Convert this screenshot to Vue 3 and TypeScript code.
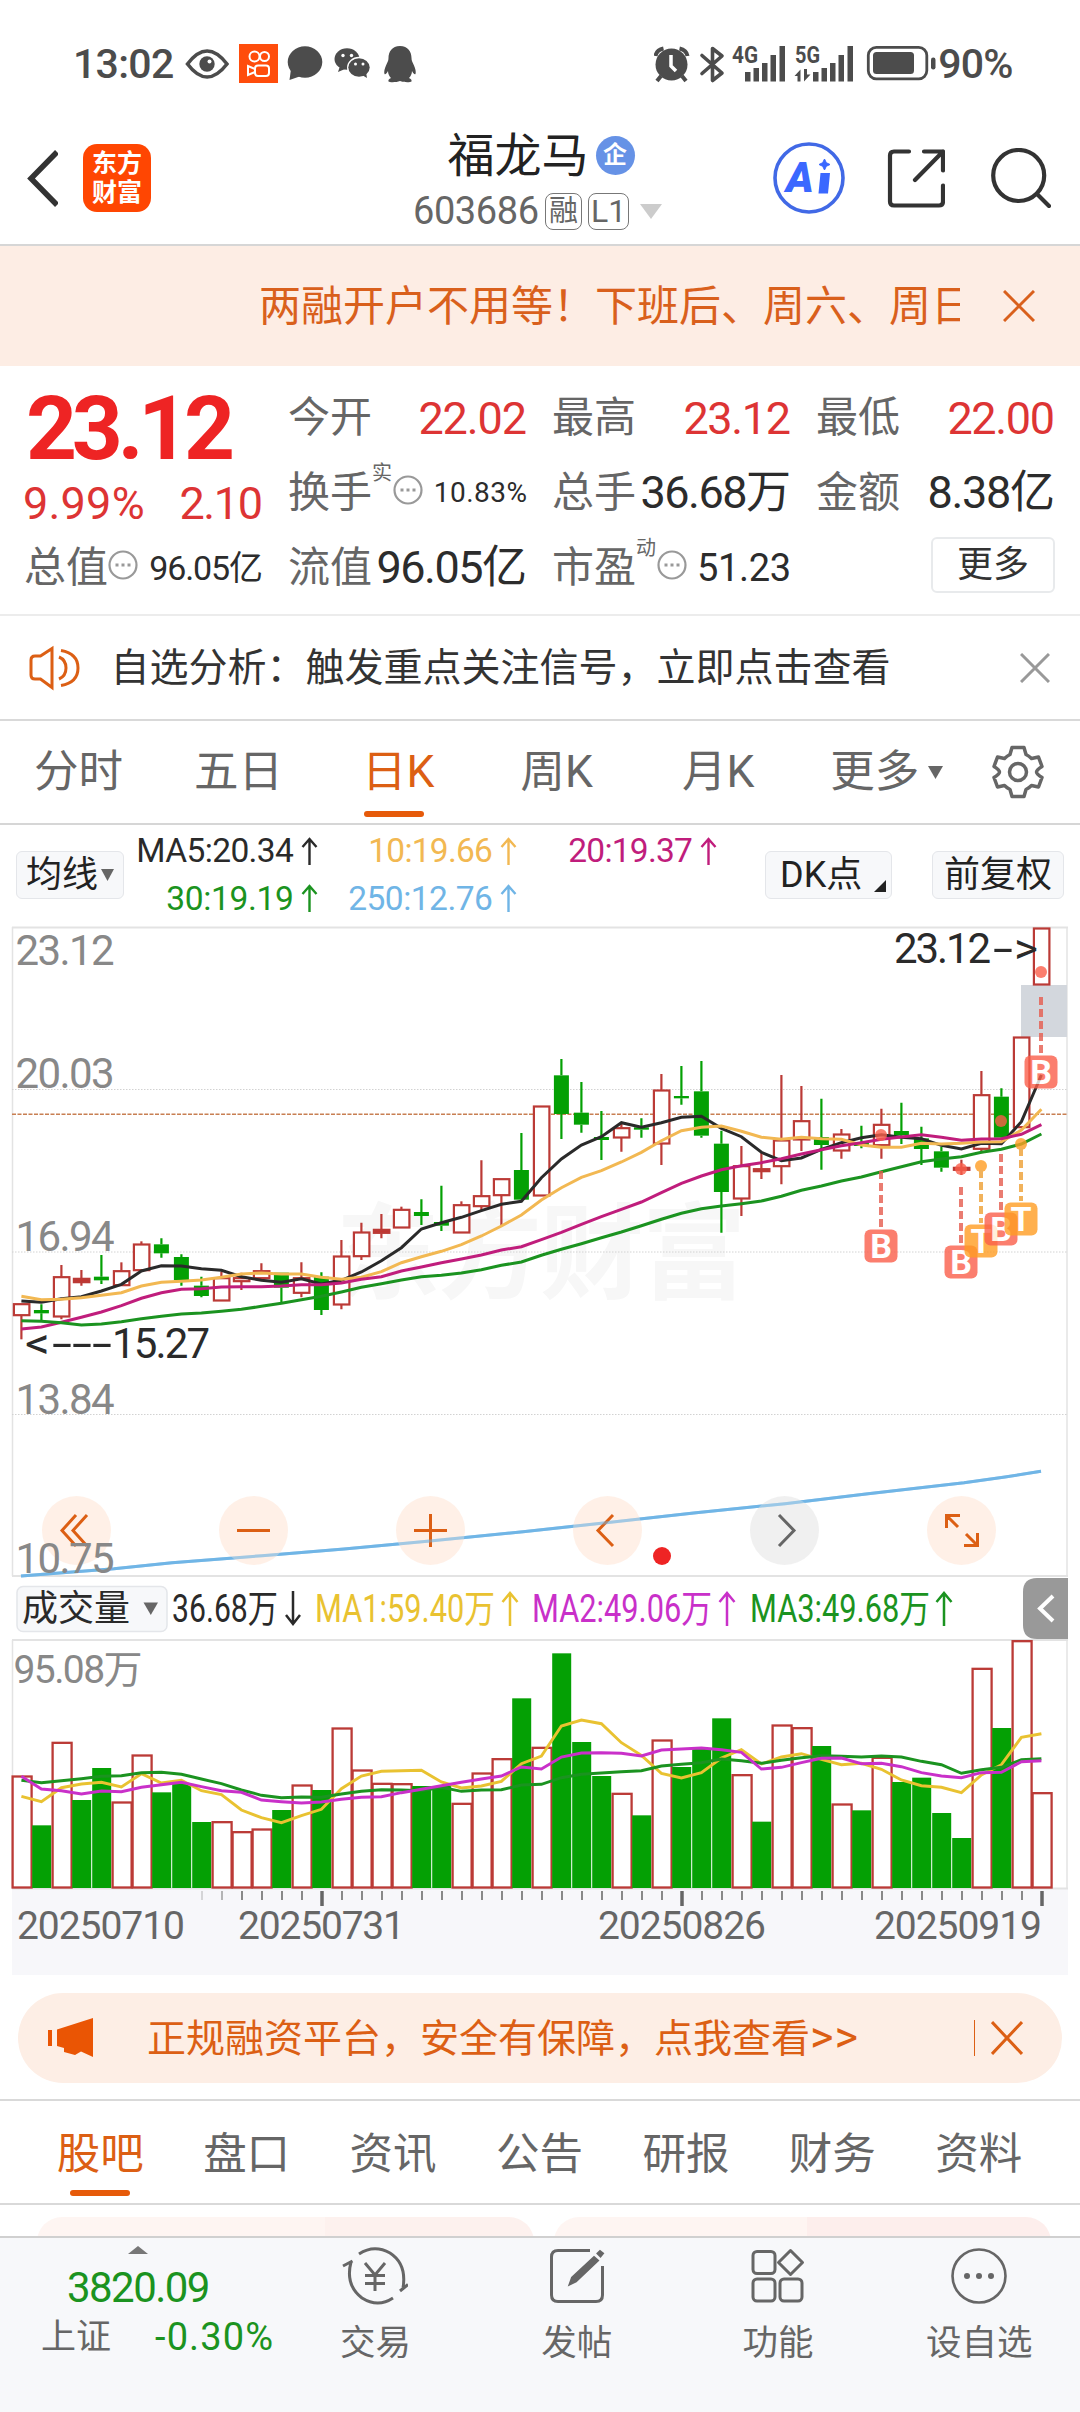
<script setup lang="ts">
type Candle = [kind: 'u' | 'd' | 'f', open: number, close: number, high: number, low: number]

// Tightens or loosens tracking so a label spans the given width.
const vFit = {
  mounted(el: HTMLElement, binding: { value: number }) {
    const range = document.createRange()
    range.selectNodeContents(el)
    const natural = range.getBoundingClientRect().width
    const size = parseFloat(getComputedStyle(el).fontSize)
    const count = (el.textContent ?? '').trim().length
    if (count < 2) return
    const gap = (binding.value + size * 0.08 - natural) / (count - 1)
    el.style.letterSpacing = `${gap}px`
    el.style.marginRight = `${-gap}px`
  },
}

const x = (i: number) => 21.4 + i * 20
const py = (v: number) => 900 + v / 3
const vy = (v: number) => 1620 + v / 3
const line = (values: number[], y: (v: number) => number) =>
  values.map((v, i) => `${x(i).toFixed(1)},${y(v).toFixed(1)}`).join(' ')

// u: rising (hollow), d: falling (solid), f: rising with a thin body
const candles: Candle[] = [
  ['u', 1211, 1247, 1211, 1318], ['d', 1230, 1240, 1213, 1263], ['u', 1130, 1251, 1095, 1258],
  ['f', 1135, 1148, 1110, 1157], ['d', 1130, 1141, 1065, 1152], ['u', 1112, 1157, 1087, 1157],
  ['u', 1032, 1112, 1024, 1112], ['d', 1033, 1060, 1015, 1073], ['d', 1071, 1140, 1063, 1157],
  ['d', 1157, 1188, 1130, 1192], ['u', 1133, 1203, 1115, 1203], ['u', 1133, 1145, 1118, 1170],
  ['u', 1112, 1136, 1090, 1140], ['d', 1118, 1163, 1118, 1207], ['u', 1133, 1180, 1087, 1192],
  ['d', 1130, 1230, 1117, 1245], ['u', 1068, 1215, 1020, 1228], ['u', 996, 1070, 968, 1080],
  ['f', 988, 1000, 942, 1015], ['u', 928, 984, 920, 984], ['d', 936, 948, 898, 975],
  ['d', 966, 977, 857, 993], ['u', 914, 999, 904, 999], ['u', 887, 920, 781, 930],
  ['u', 836, 887, 836, 975], ['d', 810, 899, 699, 903], ['u', 618, 888, 618, 888],
  ['d', 526, 642, 477, 717], ['d', 638, 674, 546, 698], ['d', 711, 720, 633, 780],
  ['u', 683, 714, 668, 755], ['d', 682, 689, 655, 713], ['u', 570, 732, 522, 795],
  ['d', 588, 595, 498, 614], ['d', 574, 707, 483, 713], ['d', 731, 876, 692, 998],
  ['u', 797, 897, 738, 948], ['f', 806, 815, 757, 837], ['u', 720, 800, 525, 853],
  ['u', 662, 720, 558, 753], ['d', 711, 735, 596, 809], ['u', 702, 753, 687, 776],
  ['d', 728, 738, 677, 745], ['u', 673, 737, 626, 776], ['d', 693, 706, 608, 732],
  ['d', 715, 747, 680, 795], ['d', 754, 803, 740, 815], ['f', 802, 811, 779, 825],
  ['u', 584, 748, 513, 760], ['d', 590, 713, 565, 720], ['u', 411, 683, 411, 683],
  ['u', 84, 255, 84, 255],
]

const averages = [
  { color: '#2a2a2a', points: [1203, 1207, 1196, 1190, 1173, 1153, 1113, 1097, 1098, 1106, 1111, 1130, 1141, 1147, 1136, 1152, 1141, 1116, 1082, 1043, 987, 968, 952, 932, 913, 904, 833, 777, 735, 710, 668, 682, 668, 652, 649, 685, 710, 757, 782, 774, 748, 728, 713, 704, 712, 716, 736, 747, 730, 731, 665, 525] },
  { color: '#f2b852', points: [1189, 1199, 1198, 1193, 1186, 1178, 1158, 1147, 1144, 1140, 1132, 1122, 1119, 1122, 1122, 1132, 1138, 1132, 1115, 1088, 1070, 1054, 1034, 1008, 978, 945, 900, 863, 832, 812, 786, 757, 722, 692, 682, 678, 694, 712, 718, 712, 716, 718, 735, 742, 742, 730, 732, 730, 726, 725, 690, 628] },
  { color: '#c01d7c', points: [1287, 1281, 1267, 1252, 1236, 1217, 1195, 1178, 1168, 1166, 1161, 1160, 1160, 1158, 1154, 1154, 1149, 1138, 1130, 1113, 1101, 1088, 1077, 1065, 1050, 1040, 1019, 997, 973, 950, 928, 906, 878, 850, 828, 809, 797, 788, 776, 762, 749, 737, 728, 718, 711, 704, 712, 721, 717, 716, 703, 674] },
  { color: '#1b9320', points: [1262, 1264, 1268, 1275, 1272, 1265, 1256, 1249, 1242, 1239, 1234, 1228, 1219, 1210, 1199, 1189, 1176, 1162, 1151, 1140, 1130, 1126, 1119, 1109, 1096, 1086, 1066, 1048, 1031, 1013, 996, 977, 958, 940, 926, 918, 911, 903, 889, 871, 858, 843, 831, 815, 800, 785, 777, 770, 757, 748, 732, 702] },
]

const yearLine = '21,1576 114,1568.7 172,1562.7 262,1555.7 344,1549 430,1541 523,1531.7 606,1522.7 696,1512.7 785,1503.7 868,1493.7 964,1482.7 1005,1477 1041,1471.3'

const volumeTops = [468, 616, 367, 540, 444, 546, 405, 517, 490, 606, 605, 635, 627, 570, 495, 510, 324, 450, 490, 491, 498, 498, 550, 459, 416, 235, 382, 100, 366, 468, 520, 586, 360, 441, 385, 295, 464, 605, 315, 323, 378, 552, 571, 412, 486, 473, 579, 654, 145, 324, 62, 518]
const volumeDown = new Set([1, 3, 4, 7, 8, 9, 13, 15, 20, 21, 25, 27, 28, 29, 31, 33, 34, 35, 37, 40, 42, 44, 45, 46, 47, 49])
const volumes = volumeTops.map((v, i) => ({ top: vy(v), down: volumeDown.has(i) }))

const volumeAverages = [
  { color: '#e9c231', points: [529, 545, 503, 492, 487, 501, 461, 489, 481, 512, 524, 570, 593, 608, 587, 568, 506, 468, 454, 452, 451, 486, 504, 498, 484, 431, 408, 318, 300, 311, 368, 406, 460, 474, 458, 414, 389, 432, 411, 401, 418, 434, 430, 448, 480, 497, 502, 518, 465, 434, 352, 341] },
  { color: '#1b9320', points: [481, 488, 482, 476, 469, 467, 458, 457, 463, 477, 491, 510, 526, 533, 531, 532, 522, 514, 509, 510, 512, 502, 514, 510, 509, 495, 493, 473, 463, 459, 455, 452, 438, 433, 428, 417, 422, 430, 421, 413, 407, 409, 411, 408, 411, 424, 434, 460, 449, 442, 419, 416] },
  { color: '#c930c9', points: [469, 507, 512, 522, 513, 515, 502, 494, 487, 500, 512, 517, 540, 545, 549, 546, 538, 532, 530, 518, 508, 497, 487, 477, 468, 441, 447, 411, 399, 398, 400, 408, 390, 387, 384, 389, 397, 447, 442, 428, 415, 414, 431, 430, 440, 458, 468, 473, 458, 457, 425, 422] },
]

const priceLabels = [
  { text: '23.12', y: 965 }, { text: '20.03', y: 1088 }, { text: '16.94', y: 1251 },
  { text: '13.84', y: 1414 }, { text: '10.75', y: 1572.5 },
]

const signals = [
  { kind: 'B', x: 881, dot: 1135, from: 1171, y: 1246 },
  { kind: 'B', x: 961, dot: 1169, from: 1187, y: 1262 },
  { kind: 'T', x: 981, dot: 1166, from: 1170, y: 1241 },
  { kind: 'B', x: 1001, dot: 1121, from: 1154, y: 1229 },
  { kind: 'T', x: 1021, dot: 1144, from: 1148, y: 1219 },
  { kind: 'B', x: 1041, dot: 972, from: 997, y: 1072 },
]
const signalColor = (kind: string) => (kind === 'B' ? '#fb5f4b' : '#ff9d23')

const ticks = Array.from({ length: 43 }, (_, n) => n + 9)
const tickMajor = (i: number) => i === 15 || i === 33 || i === 51
const dates = [
  { text: '20250710', x: 17, w: 168 }, { text: '20250731', x: 238, w: 167 },
  { text: '20250826', x: 598, w: 168 }, { text: '20250919', x: 874, w: 168 },
]

const volumeLegend = [
  { text: '36.68万', x: 172, w: 106, color: '#2a2a2a', arrow: 293, down: true },
  { text: 'MA1:59.40万', x: 315, w: 180, color: '#e9c231', arrow: 510, down: false },
  { text: 'MA2:49.06万', x: 532, w: 180, color: '#c930c9', arrow: 727, down: false },
  { text: 'MA3:49.68万', x: 750, w: 180, color: '#1b9320', arrow: 944, down: false },
]

const tabs = ['股吧', '盘口', '资讯', '公告', '研报', '财务', '资料']
</script>

<template>
  <div class="page">
    <div class="status">
      <span v-fit="98" class="clock">13:02</span>
      <svg class="eye" width="44" height="30" viewBox="186 48.500 44 30" fill="none" stroke="#4c4c4c" stroke-width="3.600">
        <path d="M188.500 63.500Q208 37.500 228 63.500Q208 89.500 188.500 63.500Z" /><circle cx="208" cy="63.500" r="7.700" fill="#4c4c4c" stroke="none" /><circle cx="210.500" cy="61" r="2" fill="#fff" stroke="none" />
      </svg>
      <svg class="ks" width="39" height="39" viewBox="0 0 39 39" fill="none" stroke="#fff" stroke-width="2">
        <path d="M0 0h39v39H0z" fill="#ff4d0c" stroke="none" /><circle cx="15.500" cy="12.500" r="5" /><circle cx="25.500" cy="12.500" r="4.500" /><rect x="16" y="21.500" width="14" height="10.500" rx="3" /><path d="M16 25l-7-3v9l7-3" />
      </svg>
      <svg class="bubble" width="36" height="35" viewBox="0 0 36 35" fill="#4c4c4c"><ellipse cx="18" cy="16" rx="17.300" ry="15.700" /><path d="M4 23l-1.500 11L14 30z" /></svg>
      <svg class="wechat" width="36" height="32" viewBox="0 0 36 32" fill="#4c4c4c">
        <ellipse cx="13" cy="11" rx="12.500" ry="10.700" /><path d="M6 18l-2 6 7-3z" /><ellipse cx="25" cy="19.500" rx="12" ry="10.700" fill="#fff" /><ellipse cx="25" cy="19.500" rx="10.700" ry="9.300" /><path d="M28 27l5 3-1-6z" /><g fill="#fff"><circle cx="9" cy="7.500" r="1.700" /><circle cx="17.500" cy="7.500" r="1.700" /><circle cx="21.500" cy="16" r="1.500" /><circle cx="29" cy="16" r="1.500" /></g>
      </svg>
      <svg class="qq" width="34" height="38" viewBox="0 0 34 38" fill="#4c4c4c"><path d="M17 1C9 1 5.500 7 5.500 13c0 3-1 4-2.500 7.500C1.500 24 .8 27 1.500 29c.8 1 2.500-1 3.500-3 0 3 1.500 5.500 3 7-2 .8-3 2-2.500 3.500 1 1 8 1 11.500-.5 3.500 1.500 10.500 1.500 11.500.5.500-1.500-.5-2.700-2.500-3.500 1.500-1.500 3-4 3-7 1 2 2.700 4 3.500 3 .7-2 0-5-1.500-8.500-1.500-3.500-2.500-4.500-2.500-7.500C28.500 7 25 1 17 1z" /></svg>
      <svg class="sysicons" width="282" height="58" viewBox="654 34 282 58" fill="#4c4c4c">
        <circle cx="671.500" cy="63.500" r="16" /><g stroke="#4c4c4c" stroke-width="4" fill="none"><path d="M655.500 55q1-6 8-7.500M687.500 55q-1-6-8-7.500M661 75l-4 5M682 75l4 5" /></g><path d="M671 54v11l5 5" fill="none" stroke="#fff" stroke-width="3.500" />
        <path d="M702 54.500l20 17.500-9.500 7.500v-32l9.500 7.500-20 17.500" fill="none" stroke="#4c4c4c" stroke-width="3.600" stroke-linejoin="round" stroke-linecap="round" />
        <text x="732" y="62" class="net" textLength="26" lengthAdjust="spacingAndGlyphs">4G</text>
        <path d="M745 71h5.500v9.500h-5.500zM753.500 67h5.500v13.500h-5.500zM762 62h5.500v18.500h-5.500zM770.500 54h5.500v26.500h-5.500zM779.500 45h5.500v35.500h-5.500z" />
        <text x="795" y="62" class="net" textLength="25" lengthAdjust="spacingAndGlyphs">5G</text>
        <path d="M813 71h5.500v9.500h-5.500zM821.500 67h5.500v13.500h-5.500zM830 62h5.500v18.500h-5.500zM838.500 54h5.500v26.500h-5.500zM847.500 45h5.500v35.500h-5.500zM794.500 75l6-6.500v12h-3v-5.500zM804 68v12.500l6.500-7h-3.500v-5.500z" />
        <rect x="868.300" y="46.300" width="58.500" height="31.500" rx="8" fill="none" stroke="#4c4c4c" stroke-width="2.800" /><rect x="873" y="51" width="41" height="22" rx="3.500" /><rect x="931" y="56.500" width="4.500" height="12" rx="2.200" />
      </svg>
      <span v-fit="72" class="clock pct">90%</span>
    </div>

    <header class="header">
      <div class="side">
        <svg width="31" height="58" viewBox="27 149 31 58" fill="none" stroke="#333" stroke-width="5.500"><path d="M57 152L31 178.500L57 205" /></svg>
        <div class="logo"><span>东方</span><span>财富</span></div>
      </div>
      <div class="title">
        <div class="name"><span>福龙马</span><i class="corp">企</i></div>
        <div class="code"><span v-fit="123">603686</span><i class="tag">融</i><i class="tag l1">L1</i><svg width="22" height="15" viewBox="0 0 22 15"><path d="M0 0h22L11 15z" fill="#ccc" /></svg></div>
      </div>
      <div class="side right">
        <svg width="72" height="72" viewBox="0 0 72 72" fill="none"><circle cx="36" cy="36" r="34" stroke="#4169e6" stroke-width="3.600" /><text x="13" y="49.500" class="ai">A</text><path d="M47.500 31h9.500l-2 20.500h-9.500z" fill="#3a68ff" /><path d="M51.500 17l1.800 3.700 3.700 1.800-3.700 1.800-1.800 3.700-1.800-3.700-3.700-1.800 3.700-1.800z" fill="#3a68ff" stroke="#3a68ff" stroke-width="1" /></svg>
        <svg class="share" width="58" height="60" viewBox="887 148 58 60" fill="none" stroke="#333" stroke-width="4.200" stroke-linecap="round" stroke-linejoin="round"><path d="M909 151.500h-15q-4 0-4 4v46q0 4 4 4h45q4 0 4-4v-16M924 151.500h19v19M943 151.500L915 180" /></svg>
        <svg class="search" width="60" height="60" viewBox="991 148 60 60" fill="none" stroke="#333" stroke-width="4.200" stroke-linecap="round"><circle cx="1018.700" cy="175.500" r="25.500" /><path d="M1037 194l12 12" /></svg>
      </div>
    </header>

    <div class="marquee">
      <div class="marquee-text">两融开户不用等！下班后、周六、周日</div>
      <svg width="32" height="32" viewBox="0 0 32 32" stroke="#d9601c" stroke-width="3"><path d="M1 1l30 30M31 1L1 31" /></svg>
    </div>

    <section class="quote">
      <div class="main">
        <b v-fit="202" class="price">23.12</b>
        <div class="change"><span v-fit="118">9.99%</span><span v-fit="80">2.10</span></div>
      </div>
      <div class="cell"><label>今开</label><span v-fit="105" class="val up">22.02</span></div>
      <div class="cell"><label>最高</label><span v-fit="104" class="val up">23.12</span></div>
      <div class="cell"><label>最低</label><span v-fit="104" class="val up">22.00</span></div>
      <div class="cell"><label>换手</label><sup>实</sup><svg class="info" width="30" height="30" viewBox="0 0 30 30"><circle cx="15" cy="15" r="13.500" /><path d="M7.500 15h3M13.500 15h3M19.500 15h3" /></svg><span v-fit="91" class="val s28">10.83%</span></div>
      <div class="cell"><label>总手</label><span v-fit="147" class="val">36.68万</span></div>
      <div class="cell"><label>金额</label><span v-fit="124" class="val">8.38亿</span></div>
      <div class="cell"><label>总值</label><svg class="info" width="30" height="30" viewBox="0 0 30 30"><circle cx="15" cy="15" r="13.500" /><path d="M7.500 15h3M13.500 15h3M19.500 15h3" /></svg><span v-fit="111" class="val s34">96.05亿</span></div>
      <div class="cell"><label>流值</label><span v-fit="147" class="val">96.05亿</span></div>
      <div class="cell"><label>市盈</label><sup>动</sup><svg class="info" width="30" height="30" viewBox="0 0 30 30"><circle cx="15" cy="15" r="13.500" /><path d="M7.500 15h3M13.500 15h3M19.500 15h3" /></svg><span v-fit="91" class="val s38">51.23</span></div>
      <div class="cell end"><div class="more">更多</div></div>
    </section>

    <div class="notice">
      <svg width="54" height="46" viewBox="28 644 54 46" fill="none" stroke="#dc5f14" stroke-width="3"><path d="M52 647.500v39L40.500 678H35q-4 0-4-4v-15q0-4 4-4h5.500zM59 656q7 3 7 11t-7 11M61 649.500q17 3 17 17.500t-17 17.500" /></svg>
      <span class="notice-text">自选分析：触发重点关注信号，立即点击查看</span>
      <svg width="30" height="30" viewBox="0 0 30 30" stroke="#999" stroke-width="3"><path d="M1 1l28 28M29 1L1 29" /></svg>
    </div>

    <nav class="periods">
      <span>分时</span><span>五日</span><span class="on">日K</span><span>周K</span><span>月K</span><span>更多</span>
      <svg class="caret" width="15" height="13" viewBox="0 0 15 13"><path d="M0 0h15L7.500 13z" fill="#666" /></svg>
      <svg class="gear" width="52" height="54" viewBox="-26 -27 52 54" fill="none" stroke="#666" stroke-width="3.500" stroke-linejoin="round"><path d="M-6 -24.500H6L8 -17.500Q11 -16 13.500 -13.500L20.500 -15L24 -5.500Q18.500 -2 18.500 0T24 5.500L20.500 15L13.500 13.500Q11 16 8 17.500L6 24.500H-6L-8 17.500Q-11 16 -13.500 13.500L-20.500 15L-24 5.500Q-18.500 2 -18.500 0T-24 -5.500L-20.500 -15L-13.500 -13.500Q-11 -16 -8 -17.500Z" /><circle r="8.500" /></svg>
    </nav>

    <div class="ma">
      <div class="btn avg">均线<svg width="13" height="12" viewBox="0 0 13 12"><path d="M0 0h13L6.500 12z" fill="#666" /></svg></div>
      <div class="ma-grid">
        <span class="m5"><em v-fit="155">MA5:20.34</em><svg class="arr" viewBox="0 0 16 28"><path d="M8 28V2M1 10l7-8 7 8" /></svg></span>
        <span class="m10"><em v-fit="122">10:19.66</em><svg class="arr" viewBox="0 0 16 28"><path d="M8 28V2M1 10l7-8 7 8" /></svg></span>
        <span class="m20"><em v-fit="122">20:19.37</em><svg class="arr" viewBox="0 0 16 28"><path d="M8 28V2M1 10l7-8 7 8" /></svg></span>
        <span class="m30"><em v-fit="125">30:19.19</em><svg class="arr" viewBox="0 0 16 28"><path d="M8 28V2M1 10l7-8 7 8" /></svg></span>
        <span class="m250"><em v-fit="142">250:12.76</em><svg class="arr" viewBox="0 0 16 28"><path d="M8 28V2M1 10l7-8 7 8" /></svg></span>
      </div>
      <div class="btn dk">DK点<svg width="12" height="12" viewBox="0 0 12 12"><path d="M12 0v12H0z" fill="#222" /></svg></div>
      <div class="btn fq">前复权</div>
    </div>

    <svg class="chart" width="1080" height="1066" viewBox="0 916 1080 1066" font-family="Roboto, 'Noto Sans CJK SC', sans-serif">
      <text x="336" y="1291" class="mark" textLength="410">东方财富</text>
      <g fill="none" stroke="#e3e3e3">
        <path d="M12 927.500H1068M12 1576H1068" stroke-width="2" /><path d="M12.500 927V1576M1067 927V1576" stroke-width="1.500" />
        <path d="M12 1089.500H1068M12 1252H1068M12 1414.500H1068" stroke="#d2d2d2" stroke-width="1" stroke-dasharray="1.500 1.500" />
      </g>
      <path d="M12 1114.300H1067" stroke="#c87f52" stroke-width="1.500" stroke-dasharray="4 1.500" />
      <rect x="1021" y="985" width="46" height="52" fill="#d3d7dd" />

      <g v-for="(c, i) in candles" :key="i" :fill="c[0] === 'd' ? '#04a004' : c[0] === 'f' ? '#c23530' : '#fff'" :stroke="c[0] === 'd' ? '#04a004' : '#bb3a36'" stroke-width="2.200">
        <path :d="`M${x(i)} ${py(c[3])}V${py(c[1])}M${x(i)} ${py(c[2])}V${py(c[4])}`" />
        <rect v-if="c[0] === 'd'" :x="x(i) - 7.500" :y="py(c[1])" width="15" :height="py(c[2]) - py(c[1])" stroke="none" />
        <rect v-else :x="x(i) - 7.500" :y="py(c[1]) + 0.5" width="15.500" :height="Math.max(py(c[2]) - py(c[1]) - 1, 1)" />
      </g>

      <g v-for="m in averages" :key="m.color"><polyline :points="line(m.points, py)" fill="none" :stroke="m.color" stroke-width="3" /></g>
      <polyline :points="yearLine" fill="none" stroke="#70b5e6" stroke-width="3" />

      <text x="894" y="963" class="mono dark" textLength="97">23.12</text>
      <text x="993" y="963" class="mono dark" textLength="20" lengthAdjust="spacingAndGlyphs">-</text>
      <text x="1014" y="963" class="mono dark" textLength="24" lengthAdjust="spacingAndGlyphs">&gt;</text>
      <text x="25" y="1358" class="mono dark" textLength="25" lengthAdjust="spacingAndGlyphs">&lt;</text>
      <text x="52" y="1358" class="mono dark" textLength="60" lengthAdjust="spacingAndGlyphs">---</text>
      <text x="112" y="1358" class="mono dark" textLength="98">15.27</text>

      <g v-for="s in signals" :key="s.x" opacity="0.8">
        <circle :cx="s.x" :cy="s.dot" r="6" :fill="signalColor(s.kind)" />
        <path :d="`M${s.x} ${s.from}V${s.y - 18}`" :stroke="s.kind === 'B' ? '#e65c4e' : '#eea033'" stroke-width="4" stroke-dasharray="8 4" />
        <rect :x="s.x - 16.500" :y="s.y - 16.500" width="33" height="33" rx="6" :fill="signalColor(s.kind)" />
        <text :x="s.x" :y="s.y + 12" class="sig">{{ s.kind }}</text>
      </g>

      <g fill="none" stroke="#dc5f14" stroke-width="3">
        <g fill="#ffe9dd" fill-opacity="0.700" stroke="none"><circle cx="76.500" cy="1530.500" r="34.500" /><circle cx="253.500" cy="1530.500" r="34.500" /><circle cx="430.500" cy="1530.500" r="34.500" /><circle cx="607.500" cy="1530.500" r="34.500" /><circle cx="784.500" cy="1530.500" r="34.500" fill="#eaeaea" /><circle cx="961.500" cy="1530.500" r="34.500" /></g>
        <path d="M76 1515L62 1530.500L76 1546M87 1515L73 1530.500L87 1546M237 1530.500h33M414 1530.500h33M430.500 1514v33M613 1515L598 1530.500L613 1546" />
        <path d="M779 1515L794 1530.500L779 1546" stroke="#666" />
        <path d="M946.500 1528V1515.500H960M947 1516L958 1527M977.500 1533V1545.500H964M977 1545L966 1534" />
      </g>
      <polyline :points="yearLine" fill="none" stroke="#70b5e6" stroke-width="3" opacity="0.500" />
      <circle cx="662" cy="1556" r="9" fill="#ee2424" />
      <text v-for="l in priceLabels" :key="l.text" x="15.500" :y="l.y" class="mono gray" textLength="99">{{ l.text }}</text>

      <rect x="17" y="1586.500" width="150" height="45" rx="6" fill="#f7f8fa" stroke="#e4e6ea" stroke-width="1.500" />
      <text x="22" y="1621" class="pick" textLength="108">成交量</text>
      <path d="M143.500 1602.500h14.500l-7.200 12.500z" fill="#666" />
      <g v-for="l in volumeLegend" :key="l.text">
        <text :x="l.x" y="1622" class="legend" :fill="l.color" :textLength="l.w" lengthAdjust="spacingAndGlyphs">{{ l.text }}</text>
        <path v-if="l.down" :d="`M${l.arrow} 1591v32M${l.arrow - 7} 1615l7 9 7-9`" fill="none" :stroke="l.color" stroke-width="2.500" />
        <path v-else :d="`M${l.arrow} 1626v-32M${l.arrow - 7.500} 1602l7.500-9 7.500 9`" fill="none" :stroke="l.color" stroke-width="2.500" />
      </g>
      <path d="M1068 1578h-31q-14 0-14 14v33q0 14 14 14h31z" fill="#999" />
      <path d="M1053 1596L1040 1608.500L1053 1621" fill="none" stroke="#fff" stroke-width="4" />

      <path d="M12 1889h1056v86H12z" fill="#f7f7fa" />
      <g fill="none" stroke="#e3e3e3" stroke-width="2"><path d="M12 1640H1068M12 1888.500H1068" /><path d="M12.500 1640V1888M1067 1640V1888" stroke-width="1.500" /></g>
      <text x="13.500" y="1683" class="vol gray" textLength="129">95.08万</text>
      <template v-for="(v, i) in volumes" :key="i">
        <rect v-if="v.down" :x="x(i) - 9.200" :y="v.top" width="19" :height="1888 - v.top" fill="#04a004" />
        <rect v-else :x="x(i) - 8.800" :y="v.top + 0.5" width="19" :height="1887 - v.top" fill="#fff" stroke="#bb3a36" stroke-width="2.300" />
      </template>
      <polyline v-for="m in volumeAverages" :key="m.color" :points="line(m.points, vy)" fill="none" :stroke="m.color" stroke-width="2.900" />
      <path v-for="i in ticks" :key="i" :d="`M${x(i) + 0.6} 1891V${tickMajor(i) ? 1906 : 1900}`" :stroke="tickMajor(i) ? '#666' : '#888'" :stroke-width="tickMajor(i) ? 3.500 : 2" :opacity="i === 9 ? 0.3 : i === 10 ? 0.6 : 1" />
      <text v-for="d in dates" :key="d.text" :x="d.x" y="1938.500" class="vol date" :textLength="d.w">{{ d.text }}</text>
    </svg>

    <div class="promo">
      <svg width="46" height="40" viewBox="47 2018 46 40" fill="#ea5504"><path d="M48 2030h4v16h-4zM57 2029.500L93 2018v39L81 2051.500l-6 3.500-11-3v-4l-7-2z" /></svg>
      <span class="promo-text">正规融资平台，安全有保障，点我查看<em>&gt;&gt;</em></span>
      <i class="bar"></i>
      <svg width="32" height="34" viewBox="0 0 32 34" stroke="#dc5f14" stroke-width="3"><path d="M1 1l30 32M31 1L1 33" /></svg>
    </div>

    <nav class="tabs">
      <span v-for="(t, i) in tabs" :key="t" :class="{ on: i === 0 }">{{ t }}</span>
    </nav>

    <div class="cards"><div class="card"></div><div class="card two"></div></div>

    <footer class="footer">
      <div class="index">
        <svg width="20" height="8" viewBox="0 0 20 8"><path d="M10 0l10 8H0z" fill="#777" /></svg>
        <span v-fit="140" class="points">3820.09</span>
        <div class="index-row"><span>上证</span><span v-fit="115" class="pctg">-0.30%</span></div>
      </div>
      <div class="act">
        <svg width="66" height="60" viewBox="342 2246 66 60" fill="none" stroke="#666" stroke-width="3"><path d="M359 2254Q374 2244 390 2253Q407 2264 403 2288M393 2298Q378 2308 362 2298Q345 2285 351 2262M343 2266l9.500-5M400 2291l8-6.500M365 2263l10 12 10-12M375 2275v16M365 2275.500h20M365 2283.500h20" /></svg>
        <span>交易</span>
      </div>
      <div class="act">
        <svg width="58" height="60" viewBox="548 2246 58 60" fill="none" stroke="#666" stroke-width="3"><path d="M590 2250.500H558q-6.500 0-6.500 6.500v38q0 6.500 6.500 6.500h38q6.500 0 6.500-6.500V2266" /><path d="M594 2257l4 3.500-22 21-6.500 3 2.500-7z" fill="#666" stroke-width="2" /><path d="M597.500 2253.500l2.500-2.500 3 2.500-2.500 3z" fill="#666" stroke-width="2" /></svg>
        <span>发帖</span>
      </div>
      <div class="act">
        <svg width="56" height="60" viewBox="751 2246 56 60" fill="none" stroke="#666" stroke-width="3" stroke-linejoin="round"><rect x="754" y="2251.500" width="22" height="22" rx="4" /><rect x="754" y="2279" width="22" height="22" rx="4" /><rect x="781" y="2279" width="22" height="22" rx="4" /><path d="M791.500 2250.500l12 12-12 12-12-12z" /></svg>
        <span>功能</span>
      </div>
      <div class="act">
        <svg width="58" height="60" viewBox="950 2246 58 60"><circle cx="979" cy="2276" r="26.500" fill="none" stroke="#666" stroke-width="2.600" /><g fill="#666"><circle cx="967" cy="2276" r="3" /><circle cx="979" cy="2276" r="3" /><circle cx="991" cy="2276" r="3" /></g></svg>
        <span>设自选</span>
      </div>
    </footer>
  </div>
</template>

<style>
body { margin: 0; background: #fff; }
</style>

<style scoped>
.page { width: 1080px; height: 2412px; overflow: hidden; display: flex; flex-direction: column; background: #fff; color: #333; font-family: Roboto, "Noto Sans CJK SC", sans-serif; line-height: 1; white-space: nowrap; }
.page > * { flex: none; box-sizing: border-box; }
i, em { font-style: normal; }
svg { display: block; flex: none; }

.status { height: 110px; padding: 17px 0 0 73px; display: flex; align-items: center; color: #4c4c4c; }
.clock { font-size: 41px; font-weight: 500; padding-top: 1px; }
.eye { margin-left: 11px; }
.ks { margin-left: 10px; }
.bubble { margin-left: 9px; }
.wechat { margin-left: 11px; }
.qq { margin-left: 13px; }
.sysicons { margin-left: auto; }
.pct { margin-left: 2px; width: 141px; box-sizing: border-box; }
.net { font-size: 23px; font-weight: 700; }

.header { height: 136px; border-bottom: 2px solid #d6d6d6; display: grid; grid-template-columns: 1fr auto 1fr; align-items: center; }
.side { display: flex; align-items: center; padding: 2px 0 0 27px; }
.side.right { padding: 2px 29px 0 0; justify-content: flex-end; }
.logo { margin-left: 25px; width: 68px; height: 68px; border-radius: 14px; background: #ff4602; color: #fff; display: flex; flex-direction: column; align-items: center; justify-content: center; gap: 4px; font-size: 25px; font-weight: 700; }
.logo span { line-height: 25px; }
.ai { font-size: 42px; font-weight: 900; fill: #3a68ff; font-style: italic; }
.share { margin-left: 42px; }
.search { margin-left: 46px; }
.title { display: flex; flex-direction: column; align-items: center; gap: 13px; padding-top: 8px; }
.name { display: flex; align-items: center; gap: 7px; font-size: 47px; color: #222; margin-left: 2px; }
.corp { width: 39px; height: 39px; border-radius: 50%; background: #6692e6; color: #fff; font-size: 24px; line-height: 39px; text-align: center; font-weight: 700; }
.code { display: flex; align-items: center; font-size: 38px; color: #666; margin-right: 5px; }
.tag { margin-left: 6px; box-sizing: border-box; width: 37px; height: 37px; border: 1.5px solid #777; border-radius: 8px; font-size: 29px; line-height: 34px; text-align: center; }
.l1 { width: 41px; font-size: 32px; }
.code svg { margin-left: 11px; }

.marquee { height: 120px; background: #fdede4; display: flex; align-items: center; padding-left: 259px; color: #d9601c; }
.marquee-text { width: 701px; overflow: hidden; font-size: 42px; line-height: 56px; margin-top: 2px; }
.marquee svg { margin-left: 43px; }

.quote { height: 250px; border-bottom: 2px solid #ececec; padding: 15px 24px 0; display: grid; grid-template-columns: repeat(4, 239px); column-gap: 25px; grid-template-rows: 74px 75px 75px; align-content: start; }
.main { grid-row: 1 / 3; display: flex; flex-direction: column; }
.price { font-size: 89px; color: #ee2424; margin: 3px 0 0 2px; }
.change { display: flex; justify-content: space-between; font-size: 45px; color: #dd3434; margin: 8px 0 0 -1px; }
.cell { display: flex; align-items: center; min-width: 0; }
.cell.end { justify-content: flex-end; }
label { font-size: 42px; color: #666; flex: none; }
.val { margin-left: auto; font-size: 45px; color: #2c2c2c; }
.val.up { color: #dd3434; }
.val.s28 { font-size: 28px; }
.val.s34 { font-size: 34px; }
.val.s38 { font-size: 38px; }
sup { font-size: 20px; color: #666; line-height: 20px; align-self: flex-start; margin-top: 8px; flex: none; }
.info { fill: none; stroke: #999; stroke-width: 2.2; margin-top: -5px; }
.info path { stroke-width: 3; }
sup + .info { margin-left: 1px; }
.more { box-sizing: border-box; width: 124px; height: 56px; border: 2px solid #e8eaec; border-radius: 6px; font-size: 36px; line-height: 52px; text-align: center; margin-top: -5px; }

.notice { height: 105px; border-bottom: 2px solid #d9d9d9; padding: 0 30px 0 28px; display: flex; align-items: center; font-size: 39px; }
.notice-text { margin-left: 28.5px; padding-top: 1px; flex: 1; }

.periods { height: 104px; border-bottom: 2px solid #d6d6d6; padding: 0 36px 0 34px; display: flex; align-items: center; font-size: 44.5px; color: #666; }
.periods span { position: relative; line-height: 106px; margin-right: 71px; }
.periods span:nth-child(2) { margin-right: 79px; }
.periods span.on { color: #dc5f14; margin-right: 86px; }
.periods .on::after { content: ""; position: absolute; left: 2px; bottom: 8px; width: 60px; height: 6px; border-radius: 3px; background: #e65a0a; }
.periods span:nth-child(4) { margin-right: 89px; }
.periods span:nth-child(5) { margin-right: 76px; }
.periods span:nth-child(6) { margin-right: 9px; }
.gear { margin-left: auto; }

.ma { height: 91px; padding: 8px 16px 0; display: flex; align-items: center; }
.btn { box-sizing: border-box; height: 48px; border: 1.5px solid #e4e6ea; border-radius: 6px; background: #f7f8fa; font-size: 36px; color: #222; display: flex; align-items: center; justify-content: center; }
.avg { width: 108px; gap: 3px; }
.dk { width: 127px; position: relative; padding-right: 15px; }
.dk svg { position: absolute; right: 5px; bottom: 6px; }
.fq { width: 132px; margin-left: 40px; }
.ma-grid { display: grid; grid-template-columns: 194px 199px 200px; row-gap: 14px; width: 642px; font-size: 33.5px; }
.ma-grid span { display: flex; align-items: center; justify-content: flex-end; gap: 7px; }
.arr { width: 17px; height: 28px; fill: none; stroke: currentColor; stroke-width: 2.4; }
.m5 { color: #2a2a2a; } .m10 { color: #f2b852; } .m20 { color: #c01d7c; } .m30 { color: #1b9320; } .m250 { color: #70b5e6; }

.chart { display: block; }
.mark { font-size: 104px; font-weight: 700; fill: #f7f7f7; }
.mono { font-size: 42px; }
.dark { fill: #2a2a2a; }
.gray { fill: #888; }
.vol { font-size: 39px; }
.date { fill: #666; }
.sig { font-size: 34px; font-weight: 700; fill: #fff; text-anchor: middle; }
.pick { font-size: 36px; fill: #2a2a2a; }
.legend { font-size: 38px; }

.promo { width: 1044px; height: 90px; margin: 11px 18px 0; border-radius: 45px; background: #fdeee5; display: flex; align-items: center; padding: 0 39px 0 29px; font-size: 39px; color: #dc5f14; }
.promo-text { margin-left: 54px; flex: 1; }
.promo-text em { font-size: 45px; line-height: 39px; letter-spacing: 1px; }
.bar { width: 1.5px; height: 36px; background: #dc5f14; margin-right: 16px; }
.tabs { margin-top: 16px; height: 106px; border-top: 2px solid #d9d9d9; border-bottom: 2px solid #d9d9d9; padding: 0 28px 0 27px; display: flex; font-size: 43.5px; color: #666; }
.tabs span { position: relative; flex: 1; text-align: center; line-height: 108px; }
.tabs .on { color: #dc5f14; }
.tabs .on::after { content: ""; position: absolute; left: 50%; margin-left: -30px; bottom: 7px; width: 60px; height: 6px; border-radius: 3px; background: #e65a0a; }
.cards { height: 31px; padding: 12px 29px 0 37px; display: flex; gap: 20px; overflow: hidden; }
.card { flex: 1; height: 60px; border-radius: 25px; background: linear-gradient(90deg, #fef5f2 58%, #fdf1ee 58%); }
.two { background: linear-gradient(90deg, #fef5f2 51%, #fdeeec 51%); }

.footer { height: 177px; border-top: 2px solid #d0d0d0; background: #f7f8fa; display: flex; padding-top: 8px; }
.index { width: 275px; display: flex; flex-direction: column; align-items: center; color: #1b9320; }
.index > * { align-self: flex-start; }
.index > svg { margin-left: 128px; }
.points { font-size: 42px; margin: 13px 0 0 67px; }
.index-row { display: flex; align-items: center; margin: 9px 0 0 41px; font-size: 38px; }
.index-row span:first-child { font-size: 35px; color: #666; margin-right: 44px; }
.act { width: 201.5px; display: flex; flex-direction: column; align-items: center; font-size: 35.5px; color: #666; }
.act span { margin-top: 20px; }
</style>
